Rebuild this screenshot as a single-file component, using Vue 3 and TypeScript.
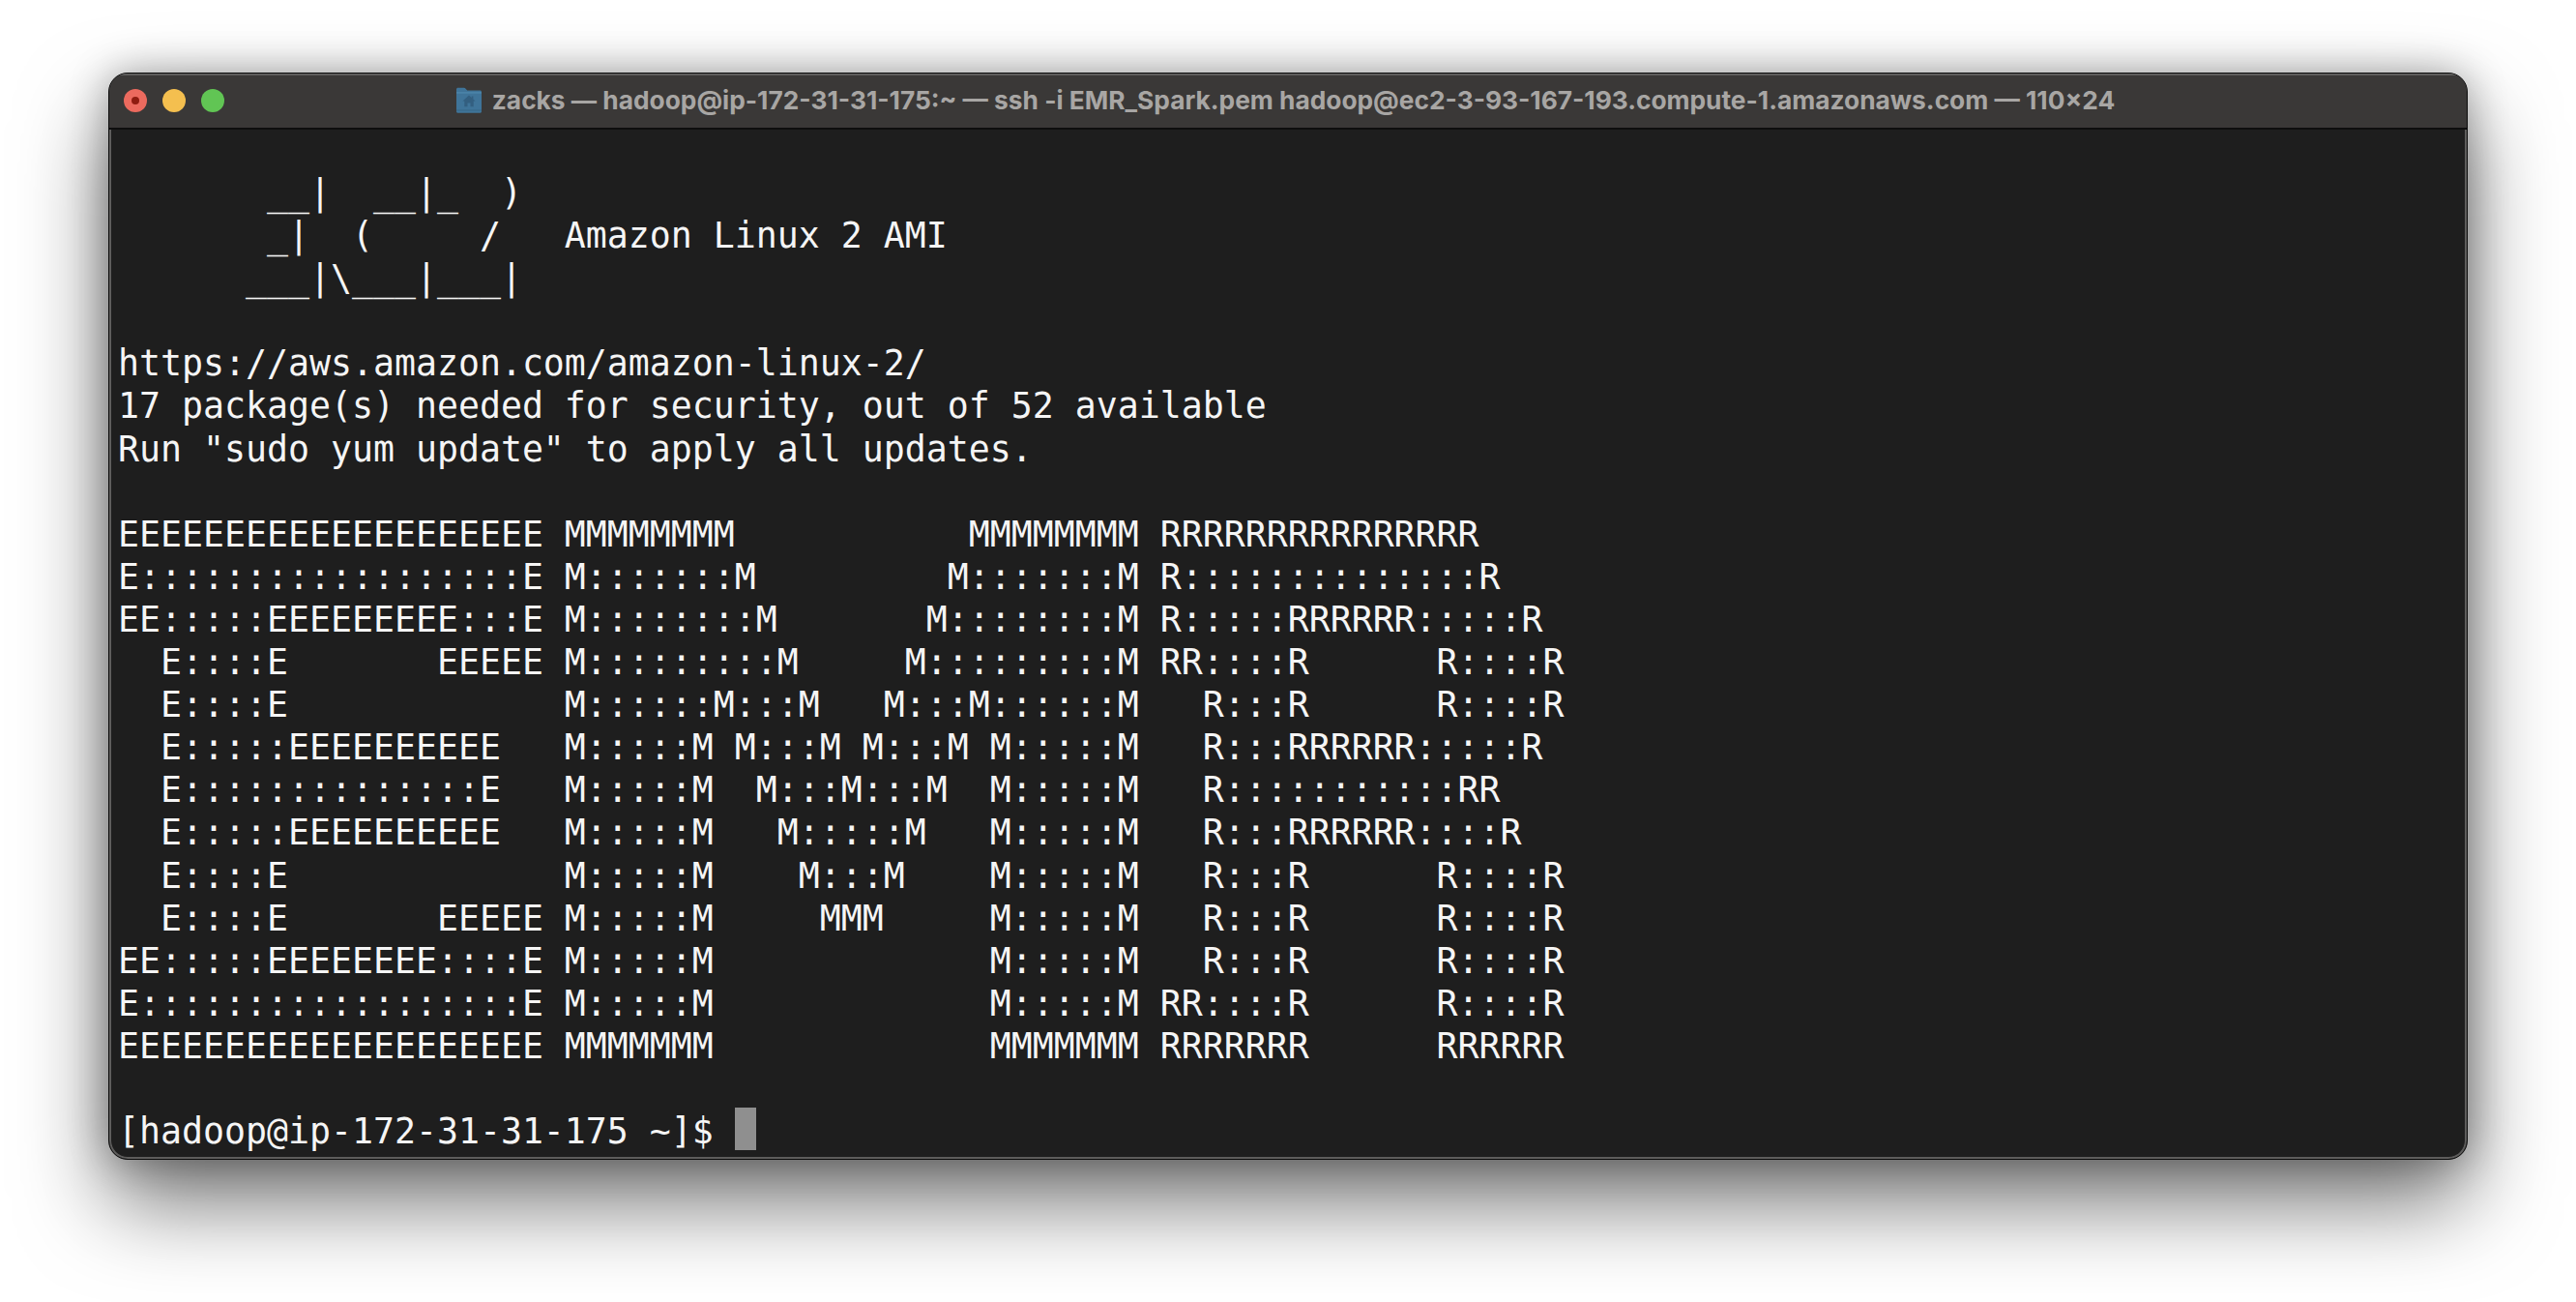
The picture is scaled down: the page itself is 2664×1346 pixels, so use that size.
<script setup lang="ts">
const title = 'zacks — hadoop@ip-172-31-31-175:~ — ssh -i EMR_Spark.pem hadoop@ec2-3-93-167-193.compute-1.amazonaws.com — 110×24'
const lines: string[] = [
  '       __|  __|_  )',
  '       _|  (     /   Amazon Linux 2 AMI',
  '      ___|\\___|___|',
  '',
  'https://aws.amazon.com/amazon-linux-2/',
  '17 package(s) needed for security, out of 52 available',
  'Run "sudo yum update" to apply all updates.',
  '',
  'EEEEEEEEEEEEEEEEEEEE MMMMMMMM           MMMMMMMM RRRRRRRRRRRRRRR',
  'E::::::::::::::::::E M:::::::M         M:::::::M R::::::::::::::R',
  'EE:::::EEEEEEEEE:::E M::::::::M       M::::::::M R:::::RRRRRR:::::R',
  '  E::::E       EEEEE M:::::::::M     M:::::::::M RR::::R      R::::R',
  '  E::::E             M::::::M:::M   M:::M::::::M   R:::R      R::::R',
  '  E:::::EEEEEEEEEE   M:::::M M:::M M:::M M:::::M   R:::RRRRRR:::::R',
  '  E::::::::::::::E   M:::::M  M:::M:::M  M:::::M   R:::::::::::RR',
  '  E:::::EEEEEEEEEE   M:::::M   M:::::M   M:::::M   R:::RRRRRR::::R',
  '  E::::E             M:::::M    M:::M    M:::::M   R:::R      R::::R',
  '  E::::E       EEEEE M:::::M     MMM     M:::::M   R:::R      R::::R',
  'EE:::::EEEEEEEE::::E M:::::M             M:::::M   R:::R      R::::R',
  'E::::::::::::::::::E M:::::M             M:::::M RR::::R      R::::R',
  'EEEEEEEEEEEEEEEEEEEE MMMMMMM             MMMMMMM RRRRRRR      RRRRRR',
  '',
]
</script>

<template>
  <div class="page">
    <section class="window">
      <header class="titlebar">
        <div class="lights">
          <span class="light red"><i></i></span>
          <span class="light yellow"></span>
          <span class="light green"></span>
        </div>
        <div class="title">
          <svg class="folder" viewBox="0 0 28 27" width="28" height="27" aria-hidden="true">
            <path d="M1 2.5C1 1.4 1.7 .8 2.6 .8h6.2c.8 0 1.3.3 1.8.9l1.6 1.9h13.2c1 0 1.6.6 1.6 1.6v20c0 .9-.6 1.5-1.6 1.5H2.6c-1 0-1.6-.6-1.6-1.5z" fill="#3f7499"/>
            <path d="M1 5.2h26v1.2H1z" fill="#4f87ad"/>
            <path d="M1 23.6h26v1H1z" fill="#376786"/>
            <path d="M14 8.6l-6.6 6h1.9v5.6h3.2v-3.7h3v3.7h3.2v-5.6h1.9l-2.2-2V9.4h-1.6v1.7z" fill="#335f80"/>
          </svg>
          <span class="title-text">{{ title }}</span>
        </div>
      </header>
      <main class="terminal">
        <div v-for="(line, i) in lines" :key="i" class="row">{{ line }}</div>
        <div class="row prompt">[hadoop@ip-172-31-31-175 ~]$ <span class="cursor"></span></div>
      </main>
    </section>
  </div>
</template>

<style scoped>
.page {
  width: 2664px;
  height: 1346px;
  padding: 75px 0 0 112px;
  box-sizing: border-box;
  background: #fff;
  overflow: hidden;
}
.window {
  width: 2440px;
  height: 1124px;
  box-sizing: border-box;
  border-radius: 20px;
  overflow: hidden;
  background: #1e1e1e;
  border: 1px solid #0c0c0c;
  box-shadow: inset 0 0 0 2px #5e5d5c, 0 0 40px rgba(0, 0, 0, 0.3), 0 44px 90px rgba(0, 0, 0, 0.55);
  display: flex;
  flex-direction: column;
}
.titlebar {
  position: relative;
  height: 58px;
  flex: none;
  box-sizing: border-box;
  padding-bottom: 2px;
  background: #3a3837;
  border-bottom: 2px solid #0e0e0e;
  box-shadow: inset 0 2px 0 #5e5d5c;
  display: flex;
  align-items: center;
  justify-content: center;
}
.lights {
  position: absolute;
  left: 15px;
  top: 16px;
  display: flex;
  gap: 16px;
}
.light {
  width: 24px;
  height: 24px;
  border-radius: 50%;
  display: flex;
  align-items: center;
  justify-content: center;
}
.light i {
  width: 8px;
  height: 8px;
  border-radius: 50%;
  background: #8f1c10;
}
.red { background: #ec6a5e; }
.yellow { background: #f4bf4f; }
.green { background: #61c554; }
.title {
  display: flex;
  align-items: center;
  gap: 10px;
  margin-right: 6px;
}
.title-text {
  font-family: "Inter", "Liberation Sans", sans-serif;
  font-size: 26.3px;
  font-weight: 700;
  color: #a8a6a4;
  white-space: pre;
}
.terminal {
  flex: 1;
  padding: 44px 0 0 9px;
  font-family: "DejaVu Sans Mono", monospace;
  font-size: 36.54px;
  line-height: 44.1px;
  color: #f5f5f5;
}
.row {
  height: 44.1px;
  white-space: pre;
}
.prompt {
  display: flex;
}
.cursor {
  display: block;
  width: 22px;
  height: 44px;
  margin-top: -3px;
  background: #8f8f8f;
}
</style>

<style>
html, body {
  margin: 0;
  background: #fff;
}
</style>
